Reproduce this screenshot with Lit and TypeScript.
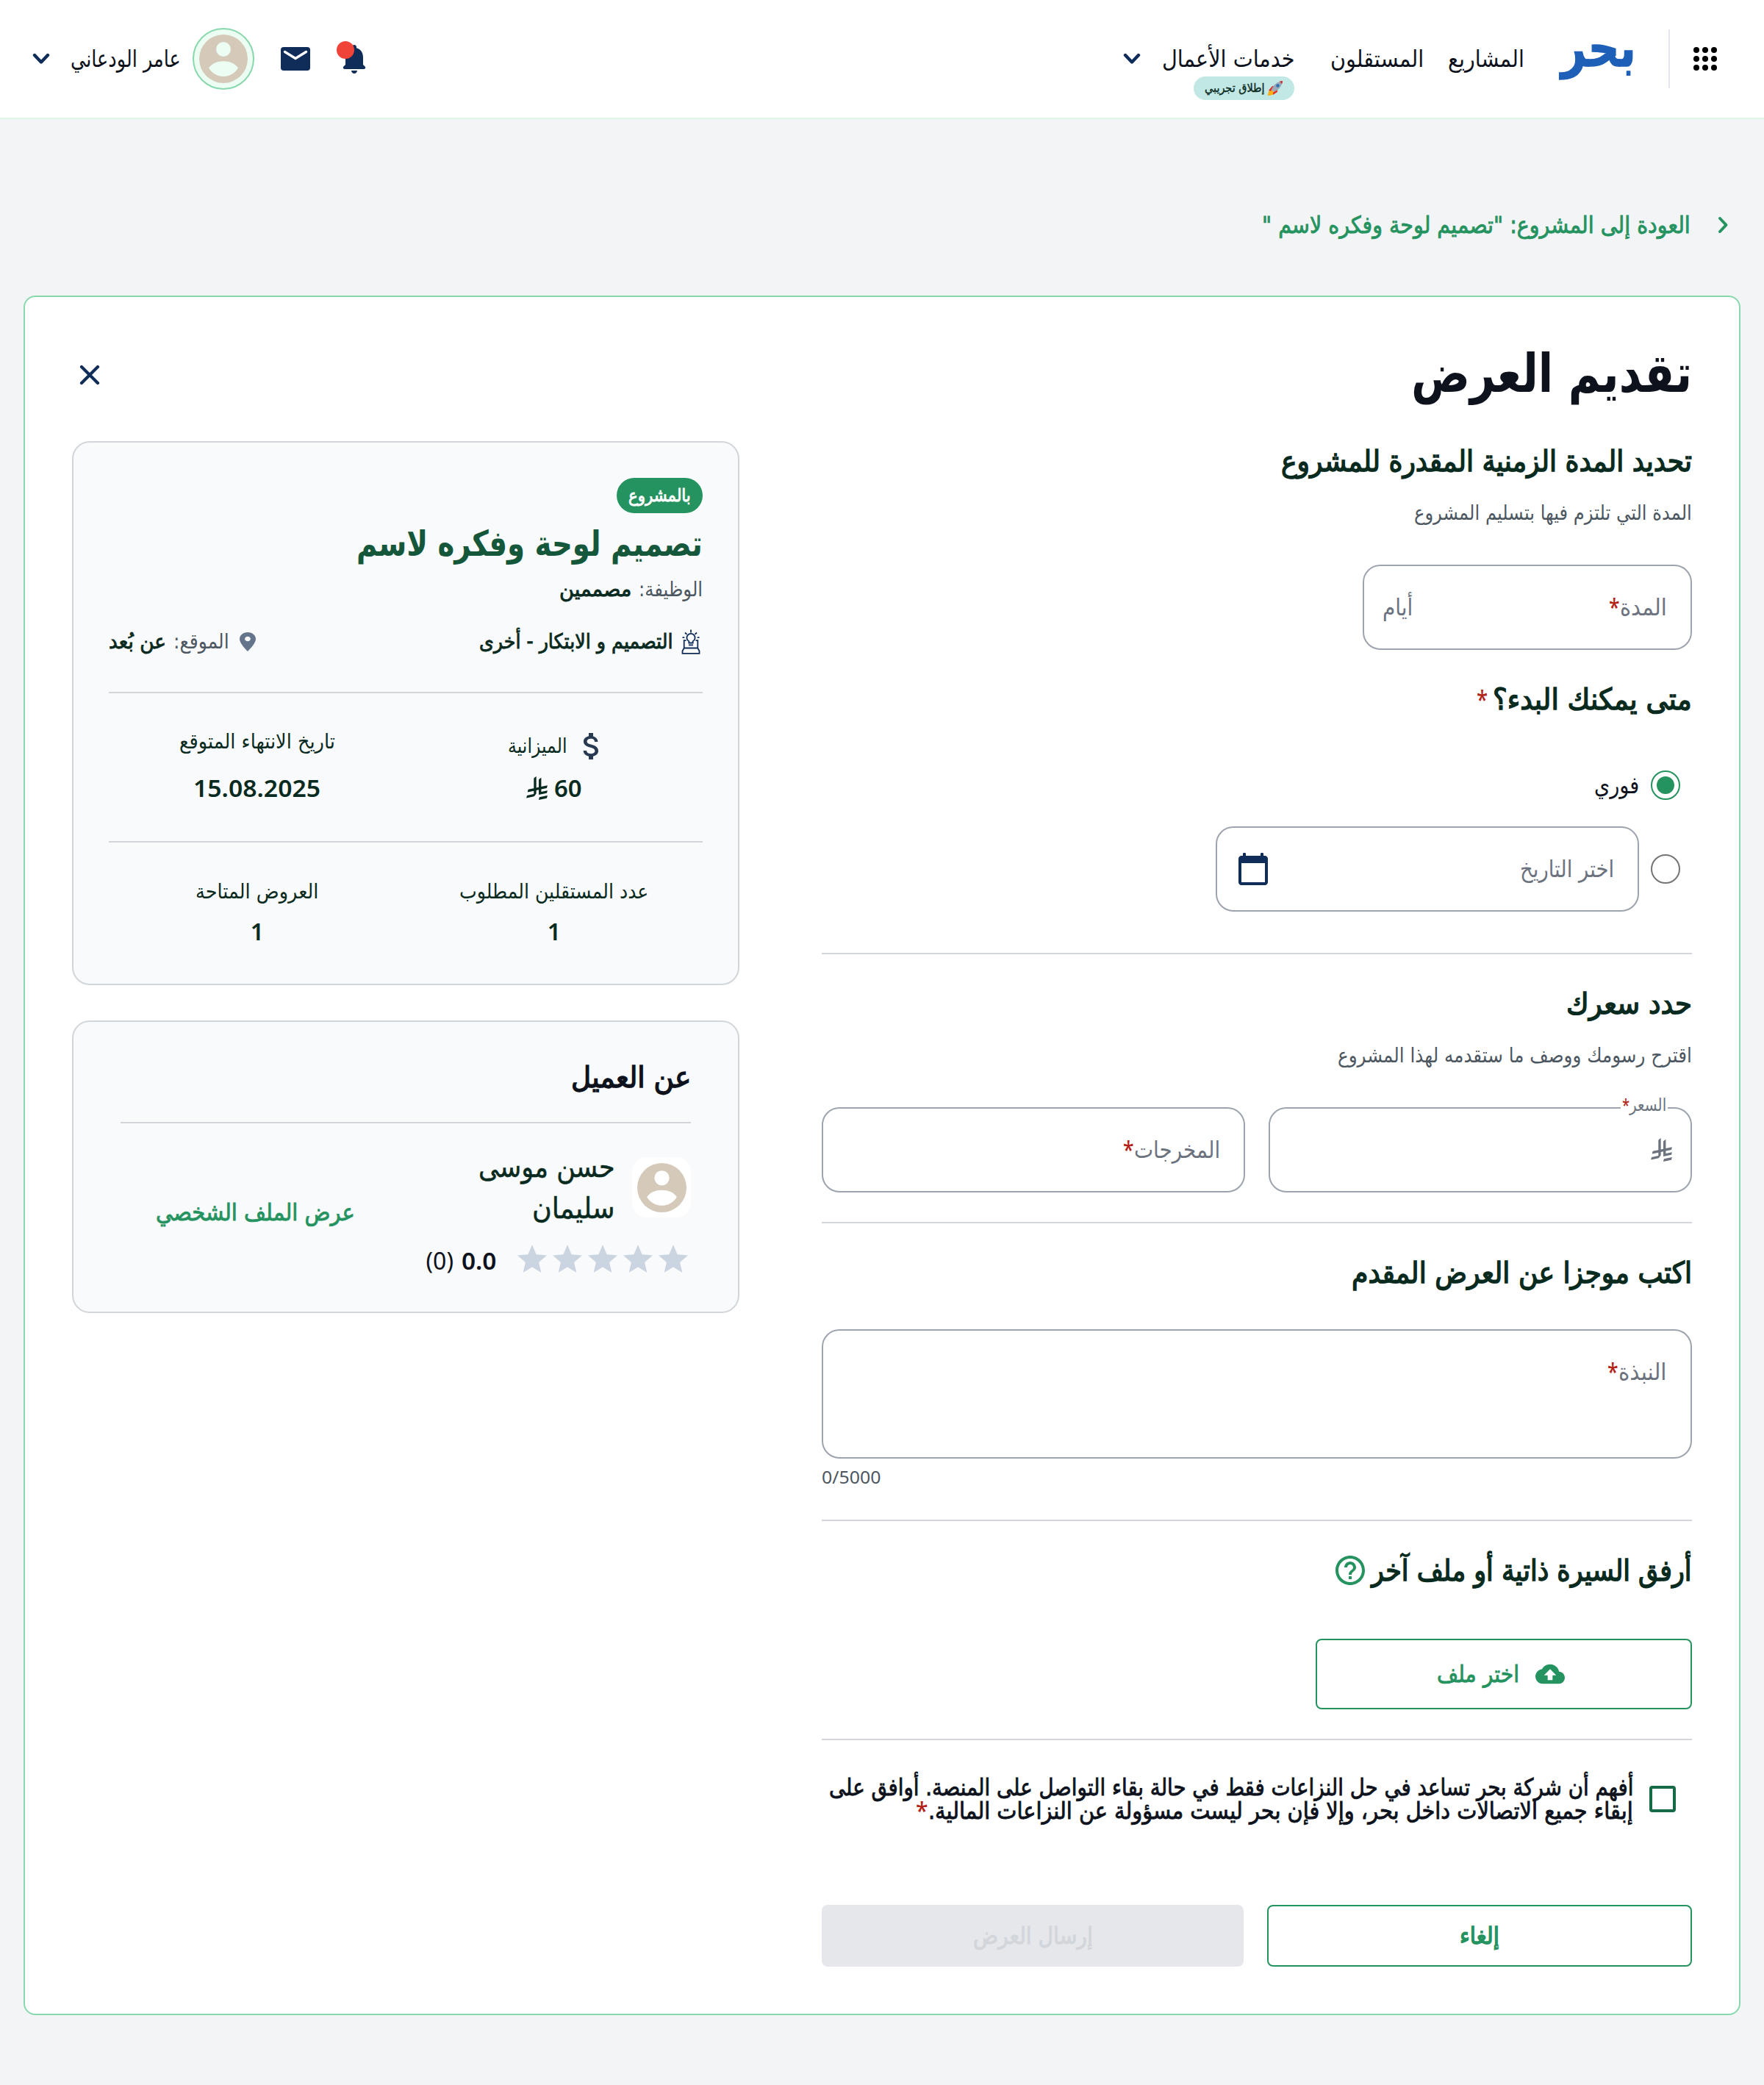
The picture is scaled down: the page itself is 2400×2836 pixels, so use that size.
import { LitElement, html, css, svg } from "lit";
import { customElement, property, query } from "lit/decorators.js";

/** One line of text, set to an exact measure by scaling it horizontally. */
@customElement("fit-text")
class FitText extends LitElement {
  @property({ type: Number }) w = 0;
  @query(".line") line!: HTMLElement;
  static styles = css`
    :host { display: block; flex: none; white-space: nowrap; }
    .line { display: inline-block; transform-origin: right center; }
  `;
  firstUpdated() {
    this.style.width = `${this.w}px`;
    const natural = this.line.offsetWidth;
    if (natural) this.line.style.transform = `scaleX(${this.w / natural})`;
  }
  render() {
    return html`<span class="line"><slot></slot></span>`;
  }
}

const chevronDown = html`<svg class="chev" viewBox="0 0 24 16"><path d="M3 3l9 9.5L21 3" fill="none" stroke="#0f2d58" stroke-width="4.4" stroke-linecap="round" stroke-linejoin="round"/></svg>`;

const riyal = html`<svg class="riyal" viewBox="0 0 1124.14 1256.39" fill="currentColor"><path d="M699.62,1113.02h0c-20.06,44.48-33.32,92.75-38.4,143.37l424.51-90.24c20.06-44.47,33.31-92.75,38.4-143.37l-424.51,90.24Z"/><path d="M1085.73,895.8c20.06-44.47,33.32-92.75,38.4-143.37l-330.68,70.33v-135.2l292.27-62.11c20.06-44.47,33.32-92.75,38.4-143.37l-330.68,70.27V66.13c-50.67,28.45-95.67,66.32-132.25,110.99v403.35l-132.25,28.11V0c-50.67,28.44-95.67,66.32-132.25,110.99v525.69l-295.91,62.88c-20.06,44.47-33.33,92.75-38.42,143.37l334.33-71.05v170.26l-358.3,76.14c-20.06,44.47-33.32,92.75-38.4,143.37l375.04-79.7c30.53-6.35,56.77-24.4,73.83-49.24l68.78-101.97v-.02c7.14-10.55,11.3-23.27,11.3-36.97v-149.98l132.25-28.11v270.4l424.53-90.28Z"/></svg>`;

const star = html`<svg class="star" viewBox="0 0 24 24"><path fill="#cbd5e1" d="M12 17.27L18.18 21l-1.64-7.03L22 9.24l-7.19-.61L12 2 9.19 8.63 2 9.24l5.46 4.73L5.82 21z"/></svg>`;

const person = (bg: string) => html`<svg class="person" viewBox="0 0 66 66"><circle cx="33" cy="33" r="33" fill="#d5c9b9"/><circle cx="33" cy="20" r="10" fill=${bg}/><path d="M13 45.6C17 39 25 36.2 33 36.2S49 39 53 45.6C48.500 53 41 57 33 57S17.500 53 13 45.600z" fill=${bg}/></svg>`;

const dots = [4, 16, 28].flatMap((y) => [4, 16, 28].map((x) => svg`<circle cx=${x} cy=${y} r="4"/>`));

@customElement("app-root")
class AppRoot extends LitElement {
  static styles = css`
    :host {
      display: block; width: 2400px; height: 2836px; overflow: hidden;
      background: #f3f4f6; color: #0d121c; direction: rtl;
      font-family: "DejaVu Sans", "Noto Sans", sans-serif; font-size: 32px; line-height: 44px;
    }
    * { box-sizing: border-box; }
    svg { display: block; flex: none; }
    .row { display: flex; align-items: center; }
    .med { -webkit-text-stroke: 0.9px currentColor; }
    .semi { -webkit-text-stroke: 1.5px currentColor; }
    .num { font-family: "Noto Sans", sans-serif; }
    .chev { width: 24px; height: 16px; }
    .riyal { width: 29px; height: 32px; }
    .req { color: #b42318; font-family: "Noto Sans", sans-serif; font-weight: 500; -webkit-text-stroke: 0; }

    header { height: 162px; background: #fff; border-bottom: 2px solid #dff6e7; padding: 0 64px 0 44px; }
    .apps { width: 32px; height: 32px; }
    .bar { width: 2px; height: 80px; background: #e5e7eb; margin: 0 32px 0 44px; }
    .logo { color: #1e5fb8; font-weight: 700; font-size: 72px; line-height: 80px; margin-bottom: 30px; -webkit-text-stroke: 1.5px currentColor; }
    .n1 { margin-right: 50px; }
    .n2 { margin-right: 33px; }
    .n3 { margin: 0 49px 0 28px; position: relative; }
    .beta { position: absolute; top: 46px; right: 0; width: 137px; height: 32px; border-radius: 16px; background: #c1e8e5; color: #092a1e; font-size: 16px; line-height: 32px; justify-content: center; gap: 4px; }
    .beta .med { -webkit-text-stroke: 0.4px currentColor; }
    .rocket { width: 22px; height: 22px; }
    .bell { position: relative; margin-right: auto; width: 48px; height: 48px; }
    .alert { position: absolute; left: 0; top: 0; width: 24px; height: 24px; border-radius: 50%; background: #f04438; }
    .i48 { width: 48px; height: 48px; }
    .mail { margin: 0 32px; }
    .avatar { width: 84px; height: 84px; border-radius: 50%; border: 2px solid #88d8ad; background: #ecfdf3; display: flex; align-items: center; justify-content: center; }
    .avatar .person { width: 66px; height: 66px; }
    .user { margin: 0 16px 0 28px; }

    .back { margin: 120px 48px 72px 0; height: 48px; color: #25935f; gap: 37px; }
    .back svg { width: 15px; height: 24px; }
    main { margin: 0 32px; height: 2339px; background: #fff; border: 2px solid #88d8ad; border-radius: 16px; padding: 50px 64px 64px; }
    .head { justify-content: space-between; height: 108px; margin-bottom: 38px; }
    .head .title { font-size: 72px; font-weight: 700; line-height: 104px; }
    .head svg { margin-top: 3px; }
    .cols { display: flex; justify-content: space-between; align-items: flex-start; }
    form { width: 1184px; }
    aside { width: 908px; }

    .h { font-size: 40px; line-height: 54px; color: #092a1e; }
    .h .req { font-size: 34px; }
    .sub { font-size: 28px; line-height: 40px; color: #4d5761; margin: 24px 0 -1px; }
    hr { border: 0; height: 2px; background: #d2d6db; margin: 40px 0; }
    .wide { margin-top: 56px; }
    .box { border: 2px solid #9da4ae; border-radius: 24px; height: 116px; padding: 0 32px 0 25px; color: #6c737f; position: relative; }
    .days { width: 448px; margin: 51px 0 40px; }
    .grow { margin-right: auto; }
    .pick { padding-right: 16px; }
    .radio { width: 40px; height: 40px; border-radius: 50%; border: 2px solid #757575; flex: none; display: flex; align-items: center; justify-content: center; margin-left: 16px; }
    .radio.on { border-color: #25935f; }
    .radio.on i { width: 24px; height: 24px; border-radius: 50%; background: #25935f; }
    .first { margin: 70px 0 36px; height: 40px; }
    .date { width: 576px; }
    .pair { display: flex; gap: 32px; margin-top: 51px; }
    .pair .box { flex: 1; }
    .pair .riyal { margin-right: -7px; }
    .notch { position: absolute; top: -21px; right: 31px; background: #fff; padding: 0 2px; font-size: 24px; line-height: 32px; }
    .area { height: 176px; margin-top: 50px; padding-top: 34px; align-items: flex-start; }
    .count { font-size: 24px; line-height: 36px; color: #4d5761; margin: 7px auto 0 0; width: 81px; }
    .help { width: 48px; height: 48px; margin: 0 5px 0 0; }
    .attach { height: 54px; }
    .btn { border: 2px solid #25935f; border-radius: 8px; color: #25935f; justify-content: center; }
    .upload { width: 512px; height: 96px; margin-top: 66px; gap: 22px; padding-right: 8px; }
    .i40 { width: 40px; height: 40px; }
    .terms { height: 64px; margin-top: 48px; padding-right: 22px; gap: 22px; }
    .lines { line-height: 32px; }
    .check { width: 36px; height: 36px; border: 4px solid #166a45; border-radius: 4px; flex: none; }
    .acts { display: flex; gap: 32px; margin-top: 112px; }
    .acts .btn { width: 578px; height: 84px; }
    .acts .off { width: 574px; border: 0; background: #e5e7eb; color: #d2d6db; }

    .card { border: 2px solid #d2d6db; border-radius: 24px; background: #f9fafb; }
    .proj { height: 740px; padding: 48px; color: #092a1e; font-size: 28px; line-height: 36px; }
    .tag { width: 117px; height: 48px; border-radius: 24px; background: #25935f; color: #fff; font-size: 24px; justify-content: center; }
    .name { font-size: 48px; line-height: 64px; font-weight: 700; color: #14573a; margin-top: 9px; }
    .role { height: 40px; margin-top: 11px; gap: 10px; }
    .soft { color: #4d5761; }
    .meta { height: 40px; margin-top: 31px; }
    .bulb { width: 26px; height: 34px; margin: 0 3px 0 12px; }
    .pin { width: 22px; height: 26px; margin-left: 14px; }
    .remote { margin-right: 10px; }
    .proj hr { margin: 48px 0 48px; }
    .proj .mid { margin: 50px 0 49px; }
    .grid { display: grid; grid-template-columns: 1fr 1fr; }
    .cell { display: flex; flex-direction: column; align-items: center; }
    .cash { height: 48px; margin: 0 -12px 11px 0; gap: 10px; }
    .val { font-size: 32px; line-height: 44px; font-weight: 600; gap: 9px; }
    .gap23 { margin-bottom: 23px; }
    .gap14 { margin-bottom: 14px; }
    .client { height: 398px; margin-top: 48px; padding: 48px 64px 0; }
    .client hr { margin: 34px 0 31px; }
    .who { display: flex; height: 112px; align-items: center; }
    .pic { width: 80px; height: 82px; border-radius: 20px; background: #fff; display: flex; align-items: center; justify-content: center; flex: none; }
    .pic .person { width: 67px; height: 67px; }
    .full { font-size: 40px; line-height: 56px; color: #092a1e; margin-right: 23px; }
    .full.med { -webkit-text-stroke: 0.5px currentColor; }
    .link { color: #25935f; margin: 0 auto 0 48px; align-self: flex-end; }
    .rate { height: 48px; margin-top: 18px; }
    .star { width: 48px; height: 48px; }
    .score { margin: 3px 25px 0 11px; font-weight: 600; }
    .cnt { margin-top: 3px; }
    .dark { color: #0d121c; }
  `;

  render() {
    return html`
      <header class="row">
        <svg class="apps" viewBox="0 0 32 32">${dots}</svg>
        <div class="bar"></div>
        <fit-text class="logo" w="102">بحر</fit-text>
        <fit-text class="n1" w="104">المشاريع</fit-text>
        <fit-text class="n2" w="127">المستقلون</fit-text>
        <div class="n3">
          <fit-text w="181">خدمات الأعمال</fit-text>
          <div class="beta row">
            <svg class="rocket" viewBox="0 0 22 22">
              <path d="M1 21c0-5 2-8 5-8l4 4c-1 3-5 4-9 4z" fill="#f9b017"/><path d="M2 14l5-6h3l-5 7zM8 20l6-4v-4l-6 5z" fill="#e03226"/>
              <path d="M6 13C8 7 13 2 21 1c-1 8-6 13-12 15z" fill="#9aa9b8"/><path d="M17 1.800C18.500 1.300 20 1 21 1c0 1.500-.4 3-.9 4.300z" fill="#d32f2f"/><circle cx="14.500" cy="7.500" r="2.200" fill="#2b6fb5"/>
            </svg>
            <fit-text class="med" w="81">إطلاق تجريبي</fit-text>
          </div>
        </div>
        ${chevronDown}
        <div class="bell">
          <svg class="i48" viewBox="0 0 24 24"><path fill="#0f2d58" d="M12 22c1.100 0 2-.9 2-2h-4c0 1.100.89 2 2 2zm6-6v-5c0-3.070-1.640-5.640-4.500-6.320V4c0-.83-.67-1.500-1.500-1.500s-1.500.67-1.500 1.500v.68C7.630 5.360 6 7.920 6 11v5l-1.300 1.300c-.63.63-.18 1.700.7 1.700h13.200c.89 0 1.330-1.080.7-1.700L18 16z"/></svg>
          <div class="alert"></div>
        </div>
        <svg class="i48 mail" viewBox="0 0 48 48"><rect x="4" y="8" width="40" height="32" rx="4" fill="#0f2d58"/><path d="M9.500 14.500L24 23.500l14.500-9" fill="none" stroke="#fff" stroke-width="3.400" stroke-linecap="round"/></svg>
        <div class="avatar">${person("#ecfdf3")}</div>
        <fit-text class="user" w="150">عامر الودعاني</fit-text>
        ${chevronDown}
      </header>

      <div class="back row">
        <svg viewBox="0 0 15 24"><path d="M3 3l8.500 9L3 21" fill="none" stroke="#25935f" stroke-width="4" stroke-linecap="round" stroke-linejoin="round"/></svg>
        <fit-text class="med" w="583">العودة إلى المشروع: "تصميم لوحة وفكره لاسم "</fit-text>
      </div>

      <main>
        <div class="head row">
          <fit-text class="title" w="382">تقديم العرض</fit-text>
          <svg class="i48" viewBox="0 0 48 48"><path d="M13 13l22 22M35 13L13 35" stroke="#0f2d58" stroke-width="4.200" stroke-linecap="round"/></svg>
        </div>
        <div class="cols">
          <form>
            <fit-text class="h semi" w="559">تحديد المدة الزمنية المقدرة للمشروع</fit-text>
            <fit-text class="sub" w="378">المدة التي تلتزم فيها بتسليم المشروع</fit-text>
            <div class="box days row">
              <fit-text w="64">المدة</fit-text><fit-text class="req" w="15">*</fit-text>
              <fit-text class="grow" w="41">أيام</fit-text>
            </div>
            <div class="row h">
              <fit-text class="semi" w="271">متى يمكنك البدء؟</fit-text>
              <fit-text class="req" w="22">&nbsp;*</fit-text>
            </div>
            <div class="pick row first"><div class="radio on"><i></i></div><fit-text w="61">فوري</fit-text></div>
            <div class="pick row">
              <div class="radio"></div>
              <div class="box date row">
                <fit-text w="128">اختر التاريخ</fit-text>
                <svg class="i48 grow" viewBox="0 0 24 24"><path fill="#0f2d58" d="M20 3h-1V1.500c0-.7-2-.7-2 0V3H7V1.500c0-.7-2-.7-2 0V3H4c-1.100 0-2 .9-2 2v16c0 1.100.9 2 2 2h16c1.100 0 2-.9 2-2V5c0-1.100-.9-2-2-2zm0 18H4V8h16v13z"/></svg>
              </div>
            </div>
            <hr class="wide" />
            <fit-text class="h semi" w="171">حدد سعرك</fit-text>
            <fit-text class="sub" w="482">اقترح رسومك ووصف ما ستقدمه لهذا المشروع</fit-text>
            <div class="pair">
              <div class="box row">
                <div class="notch row"><fit-text w="50">السعر</fit-text><fit-text class="req" w="10">*</fit-text></div>
                ${riyal}
              </div>
              <div class="box row"><fit-text w="117">المخرجات</fit-text><fit-text class="req" w="15">*</fit-text></div>
            </div>
            <hr />
            <fit-text class="h semi" w="463">اكتب موجزا عن العرض المقدم</fit-text>
            <div class="box area row"><fit-text w="66">النبذة</fit-text><fit-text class="req" w="15">*</fit-text></div>
            <fit-text class="count num" w="81">0/5000</fit-text>
            <hr />
            <div class="row attach">
              <fit-text class="h semi" w="436">أرفق السيرة ذاتية أو ملف آخر</fit-text>
              <svg class="help" viewBox="0 0 24 24"><path fill="#25935f" d="M11 18h2v-2h-2v2zm1-16C6.480 2 2 6.480 2 12s4.480 10 10 10 10-4.480 10-10S17.520 2 12 2zm0 18c-4.410 0-8-3.590-8-8s3.590-8 8-8 8 3.590 8 8-3.590 8-8 8zm0-14c-2.210 0-4 1.790-4 4h2c0-1.100.9-2 2-2s2 .9 2 2c0 2-3 1.750-3 5h2c0-2.250 3-2.500 3-5 0-2.210-1.790-4-4-4z"/></svg>
            </div>
            <div class="btn upload row">
              <svg class="i40" viewBox="0 0 24 24"><path fill="#25935f" d="M19.350 10.040C18.670 6.590 15.640 4 12 4 9.110 4 6.600 5.640 5.350 8.040 2.340 8.360 0 10.910 0 14c0 3.310 2.690 6 6 6h13c2.760 0 5-2.240 5-5 0-2.640-2.050-4.780-4.650-4.960zM14 13v4h-4v-4H7l5-5 5 5h-3z"/></svg>
              <fit-text class="med" w="112">اختر ملف</fit-text>
            </div>
            <hr />
            <div class="terms row">
              <div class="check"></div>
              <div class="lines med">
                <fit-text w="1094">أفهم أن شركة بحر تساعد في حل النزاعات فقط في حالة بقاء التواصل على المنصة. أوافق على</fit-text>
                <div class="row"><fit-text w="959">إبقاء جميع الاتصالات داخل بحر، وإلا فإن بحر ليست مسؤولة عن النزاعات المالية.</fit-text><fit-text class="req" w="17">*</fit-text></div>
              </div>
            </div>
            <div class="acts">
              <div class="btn row semi"><fit-text w="54">إلغاء</fit-text></div>
              <div class="btn off row med"><fit-text w="163">إرسال العرض</fit-text></div>
            </div>
          </form>

          <aside>
            <section class="card proj">
              <div class="tag row med"><fit-text w="85">بالمشروع</fit-text></div>
              <fit-text class="name" w="471">تصميم لوحة وفكره لاسم</fit-text>
              <div class="role row"><fit-text class="soft" w="87">الوظيفة:</fit-text><fit-text class="med" w="98">مصممين</fit-text></div>
              <div class="meta row">
                <svg class="bulb" viewBox="-0.500 -0.500 25 34" fill="none" stroke="#0f2d58" stroke-width="1.800"><path d="M12 0v4M4 4l2.400 2.400M20 4l-2.400 2.400M.5 10.700h2.800M20.700 10.700h2.800M9.300 18v-2.200a5.600 5.600 0 1 1 5.400 0V18zM9 20.800h6M5.500 14.700H2.700V25h18.600V14.700h-2.800M2.700 25l-2.200 4v3.300h23V29l-2.200-4"/></svg>
                <fit-text class="med" w="264">التصميم و الابتكار - أخرى</fit-text>
                <svg class="pin grow" viewBox="5 2 14 20" preserveAspectRatio="none"><path fill="#64748b" d="M12 2C8.130 2 5 5.130 5 9c0 5.250 7 13 7 13s7-7.750 7-13c0-3.870-3.130-7-7-7zm0 9.500c-1.380 0-2.500-1.120-2.500-2.500s1.120-2.500 2.500-2.500 2.500 1.120 2.500 2.500-1.120 2.500-2.500 2.500z"/></svg>
                <fit-text class="soft" w="76">الموقع:</fit-text>
                <fit-text class="med remote" w="78">عن بُعد</fit-text>
              </div>
              <hr />
              <div class="grid">
                <div class="cell">
                  <div class="cash row">
                    <svg class="i48" viewBox="0 0 24 24"><path fill="#283a52" d="M11.800 10.900c-2.270-.59-3-1.200-3-2.150 0-1.090 1.010-1.850 2.700-1.850 1.780 0 2.440.85 2.500 2.100h2.210c-.07-1.720-1.120-3.300-3.210-3.810V3h-3v2.160c-1.940.42-3.500 1.680-3.500 3.610 0 2.310 1.910 3.460 4.700 4.130 2.500.6 3 1.480 3 2.410 0 .69-.49 1.790-2.700 1.790-2.060 0-2.870-.92-2.980-2.100h-2.200c.12 2.190 1.760 3.420 3.680 3.830V21h3v-2.150c1.950-.37 3.500-1.500 3.500-3.550 0-2.840-2.430-3.810-4.700-4.400z"/></svg>
                    <fit-text w="80">الميزانية</fit-text>
                  </div>
                  <div class="val row num"><fit-text w="38">60</fit-text>${riyal}</div>
                </div>
                <div class="cell">
                  <fit-text class="gap23" w="212">تاريخ الانتهاء المتوقع</fit-text>
                  <fit-text class="val num" w="173">15.08.2025</fit-text>
                </div>
              </div>
              <hr class="mid" />
              <div class="grid">
                <div class="cell"><fit-text class="gap14" w="257">عدد المستقلين المطلوب</fit-text><div class="val num">1</div></div>
                <div class="cell"><fit-text class="gap14" w="167">العروض المتاحة</fit-text><div class="val num">1</div></div>
              </div>
            </section>

            <section class="card client">
              <fit-text class="h semi dark" w="163">عن العميل</fit-text>
              <hr />
              <div class="who">
                <div class="pic">${person("#fff")}</div>
                <div class="full med"><fit-text w="186">حسن موسى</fit-text><fit-text w="113">سليمان</fit-text></div>
                <fit-text class="link med" w="271">عرض الملف الشخصي</fit-text>
              </div>
              <div class="rate row num">
                ${[1, 2, 3, 4, 5].map(() => star)}
                <fit-text class="score" w="47">0.0</fit-text>
                <fit-text class="cnt" w="38">(0)</fit-text>
              </div>
            </section>
          </aside>
        </div>
      </main>
    `;
  }
}
